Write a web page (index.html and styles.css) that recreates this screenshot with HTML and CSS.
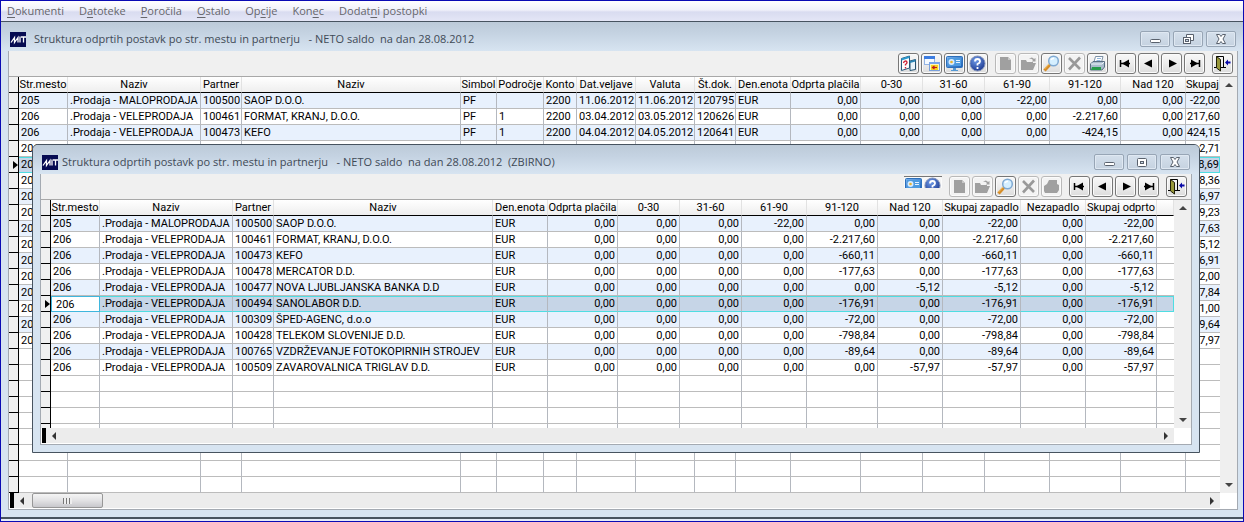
FILE: index.html
```html
<!DOCTYPE html>
<html lang="sl">
<head>
<meta charset="utf-8">
<title>Struktura odprtih postavk</title>
<link rel="stylesheet" href="styles.css">
</head>
<body>
<svg class="defs" aria-hidden="true">
  <linearGradient id="blue" x1="0" y1="0" x2="1" y2="1"><stop offset="0" stop-color="#7db4ee"/><stop offset="1" stop-color="#1c5fb8"/></linearGradient>
  <radialGradient id="ball" cx=".4" cy=".3" r=".8"><stop offset="0" stop-color="#6f9be8"/><stop offset="1" stop-color="#152f88"/></radialGradient>
  <symbol id="logo" viewBox="0 0 16 15"><rect width="16" height="15" fill="#060b52"/><path d="M1 10.500L4.500 5.500V10.500L8 5.500V10.500M10 4.500V10.500M11 5H16M13.500 5V10.500" fill="none" stroke="#fff" stroke-width="1.300"/></symbol>
  <symbol id="i-find" viewBox="0 0 17 17"><path d="M1.500 3.500L9.500 1V13L1.500 15.500Z" fill="#fff" stroke="#2b587c"/><path d="M1.500 3.500L9.500 1V3L1.500 5.500Z" fill="#2c9bd0"/><path d="M10 6L15.500 4.500V14.500L10 15.500Z" fill="#e8f4fb" stroke="#24506e"/><path d="M10 6L15.500 4.500V6.500L10 8Z" fill="#2c84b4"/><path d="M3.500 8Q4 6 5.500 6T7 7.500Q7 8.500 5.500 9.500V10.500M5.500 12V13.500" stroke="#d0243a" stroke-width="1.400" fill="none"/></symbol>
  <symbol id="i-windows" viewBox="0 0 17 17"><rect x="1.500" y="1.500" width="10" height="8" fill="#f5faff" stroke="#94b4e4"/><rect x="1" y="1" width="11" height="3" fill="#3c7ce0"/><rect x="6.500" y="7.500" width="10" height="8" fill="#fff6b8" stroke="#7aa0dc"/><rect x="6" y="7" width="11" height="2" fill="#79a4ec"/><rect x="8" y="10" width="7" height="5" fill="#f7d020"/><path d="M9 12.500H14M11.500 11L9.500 12.500L11.500 14" stroke="#c01818" stroke-width="1.200" fill="none"/></symbol>
  <symbol id="i-monitor" viewBox="0 0 17 17"><rect x=".5" y="1.500" width="16" height="11" rx="1" fill="url(#blue)" stroke="#2c70bb"/><rect x="2" y="3" width="13" height="8" fill="#4d9be0"/><circle cx="5.500" cy="7" r="3" fill="#d7ebff"/><circle cx="5.500" cy="7" r="1.300" fill="#e8b430"/><path d="M10 5.500H14M10 7.500H14" stroke="#e6f3ff"/><path d="M7 13H10V15H12V16H5V15H7Z" fill="#5599d4"/></symbol>
  <symbol id="i-help" viewBox="0 0 17 17"><circle cx="8.500" cy="8.500" r="7.500" fill="url(#ball)" stroke="#8292b8"/><path d="M6 6.500Q6 4 8.500 4T11 6.500Q11 8 8.500 9V10.500M8.500 12V14" fill="none" stroke="#fff" stroke-width="1.800"/></symbol>
  <symbol id="i-new" viewBox="0 0 17 17"><path d="M3 2H11L14 5V15H3Z" fill="#a0a0a0"/><path d="M11 2V5H14" fill="#c8c8c8"/></symbol>
  <symbol id="i-open" viewBox="0 0 17 17"><path d="M1 5H6L7 7H13V8H16L13 15H1Z" fill="#a0a0a0"/><path d="M9 4Q12 1 14 4L15.500 3V6.500H12L13 5Q11 3 9 4" fill="#a0a0a0"/></symbol>
  <symbol id="i-search" viewBox="0 0 17 17"><path d="M1.500 15.500L7 9.500" stroke="#d68d28" stroke-width="3.200"/><path d="M1.500 14L6 9" stroke="#f5c46c"/><circle cx="10.500" cy="6" r="4.800" fill="#d5efff" stroke="#7fa9d2" stroke-width="1.500"/><path d="M8 5Q9 3 11 3.500" stroke="#fff" stroke-width="1.500" fill="none"/></symbol>
  <symbol id="i-delete" viewBox="0 0 17 17"><path d="M3 3L14 14M14 2.500L3 14.500" stroke="#999" stroke-width="2.600"/></symbol>
  <symbol id="i-print" viewBox="0 0 17 17"><path d="M5 7L6.500 1.500H14L12.500 7" fill="#fff" stroke="#7c91a6"/><path d="M8 3.500H12M7.500 5.500H11.500" stroke="#92b7df"/><path d="M1.500 9L4 6.500H15.500V12L13 15H1.500Z" fill="#a9bccd" stroke="#596f83"/><path d="M2 9H13L15 7" stroke="#eef5fb" fill="none"/><path d="M3 12H12V15H2Z" fill="#269b4b"/></symbol>
  <symbol id="i-printoff" viewBox="0 0 17 17"><path d="M6 2H14V6L16 7V12L14 15H2L1 13V8L4 6Z" fill="#a0a0a0"/></symbol>
  <symbol id="i-first" viewBox="0 0 17 17"><path d="M3.500 5V12M4 8.500H13" stroke="#000" stroke-width="1.500"/><path d="M5 8.500L12 4.500V12.500Z"/></symbol>
  <symbol id="i-prev" viewBox="0 0 17 17"><path d="M4 8.500L12 4.500V12.500Z"/></symbol>
  <symbol id="i-next" viewBox="0 0 17 17"><path d="M14 8.500L6 4.500V12.500Z"/></symbol>
  <symbol id="i-last" viewBox="0 0 17 17"><path d="M13.500 5V12M4 8.500H13" stroke="#000" stroke-width="1.500"/><path d="M12 8.500L5 4.500V12.500Z"/></symbol>
  <symbol id="i-exit" viewBox="0 0 17 17"><path d="M2.500 12.500V1.500H9.500V12.500M0 12.500H3M7 12.500H12" fill="none" stroke="#000"/><path d="M2.500 1.500L6.500 4.500V16L2.500 13Z" fill="#98983a" stroke="#20200a"/><path d="M11 7.500L14 4.500V6.500H16.500V8.500H14V10.500Z" fill="#0808a8"/></symbol>
  <symbol id="w-min" viewBox="0 0 16 12"><rect x="3.500" y="6.500" width="10" height="3" rx="1" fill="#fff" stroke="#59616d"/></symbol>
  <symbol id="w-restore" viewBox="0 0 16 12"><path d="M6.500 1.500H13.500V7.500H10.500V4.500H6.500Z" fill="#fff" stroke="#59616d"/><rect x="3.500" y="4.500" width="7" height="6" fill="#fff" stroke="#59616d"/><rect x="5.500" y="6.500" width="3" height="2" fill="#cbd9e7" stroke="#59616d"/></symbol>
  <symbol id="w-max" viewBox="0 0 16 12"><rect x="3.500" y="2.500" width="9" height="8" rx="1" fill="#fff" stroke="#59616d"/><rect x="6.500" y="5.500" width="3" height="2" fill="#cbd9e7" stroke="#59616d"/></symbol>
  <symbol id="w-close" viewBox="0 0 16 12"><path d="M3.500 1.500H6.500L8 3.500L9.500 1.500H12.500L10 6L12.500 10.500H9.500L8 8.500L6.500 10.500H3.500L6 6Z" fill="#fff" stroke="#59616d"/></symbol>
</svg>

<div class="app">
  <nav class="menu">
    <button><u>D</u>okumenti</button>
    <button>D<u>a</u>toteke</button>
    <button><u>P</u>oročila</button>
    <button><u>O</u>stalo</button>
    <button>Op<u>c</u>ije</button>
    <button>Kon<u>e</u>c</button>
    <button>Dodat<u>n</u>i postopki</button>
  </nav>

  <main class="window window-main">
    <header class="titlebar">
      <svg class="logo"><use href="#logo"/></svg>
      <h1 class="title">Struktura odprtih postavk po str. mestu in partnerju   - NETO saldo  na dan 28.08.2012</h1>
      <div class="controls">
        <button aria-label="Pomanjšaj"><svg><use href="#w-min"/></svg></button>
        <button aria-label="Obnovi"><svg><use href="#w-restore"/></svg></button>
        <button aria-label="Zapri"><svg><use href="#w-close"/></svg></button>
      </div>
    </header>
    <div class="content">
      <div class="toolbar">
        <div class="group">
          <button aria-label="Poizvedba"><svg><use href="#i-find"/></svg></button>
          <button aria-label="Okna"><svg><use href="#i-windows"/></svg></button>
          <button aria-label="Zaslon"><svg><use href="#i-monitor"/></svg></button>
          <button aria-label="Pomoč"><svg><use href="#i-help"/></svg></button>
        </div>
        <div class="group">
          <button disabled aria-label="Nov"><svg><use href="#i-new"/></svg></button>
          <button disabled aria-label="Odpri"><svg><use href="#i-open"/></svg></button>
          <button aria-label="Išči"><svg><use href="#i-search"/></svg></button>
          <button disabled aria-label="Briši"><svg><use href="#i-delete"/></svg></button>
          <button aria-label="Tiskaj"><svg><use href="#i-print"/></svg></button>
        </div>
        <div class="group">
          <button aria-label="Prvi"><svg><use href="#i-first"/></svg></button>
          <button aria-label="Prejšnji"><svg><use href="#i-prev"/></svg></button>
          <button aria-label="Naslednji"><svg><use href="#i-next"/></svg></button>
          <button aria-label="Zadnji"><svg><use href="#i-last"/></svg></button>
        </div>
        <div class="group"><button aria-label="Izhod"><svg><use href="#i-exit"/></svg></button></div>
      </div>
      <div class="gridarea">
        <div class="viewport"><table class="grid" id="details"></table></div>
        <div class="vscroll"><button class="up" aria-label="Gor"></button><button class="down" aria-label="Dol"></button></div>
        <div class="hscroll"><span class="marker"></span><button class="left" aria-label="Levo"></button><span class="thumb"></span><button class="right" aria-label="Desno"></button></div>
        <div class="corner"></div>
      </div>
    </div>
  </main>

  <section class="window window-summary">
    <header class="titlebar">
      <svg class="logo"><use href="#logo"/></svg>
      <h2 class="title">Struktura odprtih postavk po str. mestu in partnerju   - NETO saldo  na dan 28.08.2012  (ZBIRNO)</h2>
      <div class="controls">
        <button aria-label="Pomanjšaj"><svg><use href="#w-min"/></svg></button>
        <button aria-label="Povečaj"><svg><use href="#w-max"/></svg></button>
        <button aria-label="Zapri"><svg><use href="#w-close"/></svg></button>
      </div>
    </header>
    <div class="content">
      <div class="toolbar">
        <div class="group clipped">
          <button aria-label="Zaslon"><svg><use href="#i-monitor"/></svg></button>
          <button aria-label="Pomoč"><svg><use href="#i-help"/></svg></button>
        </div>
        <div class="group">
          <button disabled aria-label="Nov"><svg><use href="#i-new"/></svg></button>
          <button disabled aria-label="Odpri"><svg><use href="#i-open"/></svg></button>
          <button aria-label="Išči"><svg><use href="#i-search"/></svg></button>
          <button disabled aria-label="Briši"><svg><use href="#i-delete"/></svg></button>
          <button disabled aria-label="Tiskaj"><svg><use href="#i-printoff"/></svg></button>
        </div>
        <div class="group">
          <button aria-label="Prvi"><svg><use href="#i-first"/></svg></button>
          <button aria-label="Prejšnji"><svg><use href="#i-prev"/></svg></button>
          <button aria-label="Naslednji"><svg><use href="#i-next"/></svg></button>
          <button aria-label="Zadnji"><svg><use href="#i-last"/></svg></button>
        </div>
        <div class="group"><button aria-label="Izhod"><svg><use href="#i-exit"/></svg></button></div>
      </div>
      <div class="gridarea">
        <div class="viewport"><table class="grid" id="summary"></table></div>
        <div class="vscroll"><button class="up" aria-label="Gor"></button><button class="down" aria-label="Dol"></button></div>
        <div class="hscroll"><span class="marker"></span><button class="left" aria-label="Levo"></button><button class="right" aria-label="Desno"></button></div>
        <div class="corner"></div>
      </div>
    </div>
  </section>
</div>
<script src="app.js"></script>
</body>
</html>
```
FILE: styles.css
```css
* { box-sizing: border-box; }
body { margin: 0; font-family: Roboto, "Liberation Sans", sans-serif; font-size: 11px; color: #000; }
button { padding: 0; border: 0; background: none; font: inherit; color: inherit; }
.defs { position: absolute; width: 0; height: 0; }

.app { position: relative; display: flex; flex-direction: column; height: 100vh; min-height: 480px; padding-bottom: 2px; border: 1px solid #0a0ab4; background: #e4ecf8; overflow: hidden; }

.menu { display: flex; flex: none; gap: 15px; height: 20px; padding-left: 6px; align-items: center; background: linear-gradient(#fff, #f0f1fa 45%, #d9dcf0 55%, #e4e6f6); font-family: "Open Sans", "Noto Sans", sans-serif; font-size: 11px; line-height: 18px; color: #66666c; }
.menu u { text-underline-offset: 2px; }

.window { display: flex; flex-direction: column; border: 1px solid #47535f; background: #d7e4f1; }
.window-main { flex: 1; min-height: 0; padding: 0 5px 7px 7px; border-width: 1px 0 2px; }
.window-summary { position: absolute; inset: 143px 43px 68px 31px; padding: 0 7px 7px; border-radius: 6px 6px 0 0; overflow: hidden; }

.titlebar { display: flex; flex: none; align-items: center; gap: 4px; height: 29px; margin: 0 -7px; padding: 5px 9px 0; background: linear-gradient(#bccad8, #c5d3e2 40%, #d7e4f1); }
.window-main .titlebar { gap: 8px; margin-right: -5px; padding-right: 7px; }
.logo { flex: none; width: 16px; height: 15px; }
.title { flex: 1; margin: 0; font-family: "Open Sans", "Noto Sans", sans-serif; font-size: 11px; font-weight: 400; line-height: 18px; white-space: pre; color: #3f4a56; overflow: hidden; }
.controls { display: flex; gap: 3px; }
.controls button { display: grid; place-items: center; width: 30px; height: 16px; border: 1px solid #97a5b5; border-radius: 2px; background: linear-gradient(#d5e0ec, #c5d2e0); box-shadow: inset 0 0 0 1px #dfe8f2; }
.controls svg { width: 16px; height: 12px; }

.content { display: flex; flex: 1; flex-direction: column; min-height: 0; border: solid #a4aab2; border-width: 0 1px 1px; background: #f0f0f0; }
.toolbar { display: flex; flex: none; justify-content: flex-end; gap: 7px; height: 25px; padding: 2px 4px 0 0; }
.group { display: flex; gap: 2px; }
.group button { display: grid; place-items: center; width: 21px; height: 21px; border: 1px solid #777; border-radius: 3px; background: linear-gradient(#f8f8f8, #ececec 50%, #dcdcdc); box-shadow: inset 0 0 0 1px #fbfbfb; }
.group button:disabled { border-color: #b9b9b9; background: #f3f3f3; }
.group svg { width: 17px; height: 17px; }
.clipped { height: 12px; gap: 0; overflow: hidden; border-top: 1px solid #777; }
.clipped button { width: 19px; height: 17px; border: 0; }

.gridarea { display: grid; flex: 1; grid-template: minmax(0, 1fr) 16px / minmax(0, 1fr) 17px; min-height: 0; border-top: 1px solid #a8a8a8; background: #fff; }
.viewport { overflow: hidden; }
.grid { width: 100%; table-layout: fixed; border-collapse: separate; border-spacing: 0; line-height: 15px; }
.grid th, .grid td { height: 16px; padding: 0 2px; overflow: hidden; white-space: nowrap; font-weight: 400; text-align: left; }
.grid thead th { padding: 0; border-right: 1px solid #e2e2e2; border-bottom: 1px solid #000; background: linear-gradient(#fff, #eee); text-align: center; }
.grid td { border-right: 1px solid #b4b8bf; border-bottom: 1px solid #bcbcbc; background: #fff; }
.grid .odd td { background: #e8f1fd; }
.grid td.blank, .grid td:last-child { padding: 0; border-right: 0; }
.grid .odd td.blank { background: #fff; }
.grid td.num { text-align: right; }
.grid .rowhead, .grid thead .rowhead { padding: 0; border-right: 1px solid #000; border-bottom: 1px solid #000; background: #f0f0f0; }
.grid .current td { border-top: 1px solid #4fdde2; border-bottom-color: #4fdde2; background: #c6d5e7; line-height: 14px; }
.grid .current td:last-child { border-right: 1px solid #4fdde2; background: #c6d5e7; }
.pointer { display: block; width: 0; margin-left: 4px; border: solid transparent; border-width: 4px 0 4px 5px; border-left-color: #000; }
.clip { display: flex; justify-content: flex-end; overflow: hidden; }
.grid .current td.editing { padding: 0; border: 0; }
.cell { display: block; width: 100%; height: 16px; padding: 0 4px; border: 1px solid #3fb6dd; background: #fff; font: inherit; color: inherit; outline: 0; }

.vscroll { display: flex; flex-direction: column; justify-content: space-between; align-items: center; padding: 6px 0; background: #efefef; }
.hscroll { display: flex; align-items: center; background: #ececec; border-bottom: 1px solid #fff; }
.corner { background: #fff; }
.marker { align-self: stretch; width: 5px; border-left: 1px solid #fff; background: #000; }
.vscroll button, .hscroll button { border: 4px solid transparent; }
.vscroll .up { border-top: 0; border-bottom-color: #444; }
.vscroll .down { border-bottom: 0; border-top-color: #444; }
.hscroll .left { margin-left: 6px; border-left: 0; border-right-color: #333; }
.hscroll .right { margin: 0 6px 0 auto; border-right: 0; border-left-color: #333; }
.thumb { align-self: stretch; width: 71px; margin-left: 8px; border: 1px solid #979797; border-radius: 2px; background: repeating-linear-gradient(90deg, #777 0 1px, #eee 1px 3px) center / 9px 6px no-repeat, linear-gradient(#f5f5f5, #e2e2e4 50%, #c8c8cc); }
```
FILE: app.js
```js
const ROW_COUNT = { details: 25, summary: 14 };

const details = {
  columns: [["Str.mesto", 49], ["Naziv", 133], ["Partner", 41], ["Naziv", 219], ["Simbol", 36], ["Področje", 47], ["Konto", 33],
    ["Dat.veljave", 59], ["Valuta", 59], ["Št.dok.", 41], ["Den.enota", 55], ["Odprta plačila", 70, 1], ["0-30", 62, 1],
    ["31-60", 62, 1], ["61-90", 65, 1], ["91-120", 71, 1], ["Nad 120", 65, 1], ["Skupaj", 0, 1]],
  rows: [
    "205|.Prodaja - MALOPRODAJA|100500|SAOP D.O.O.|PF||2200|11.06.2012|11.06.2012|120795|EUR|0,00|0,00|0,00|-22,00|0,00|0,00|-22,00",
    "206|.Prodaja - VELEPRODAJA|100461|FORMAT, KRANJ, D.O.O.|PF|1|2200|03.04.2012|03.05.2012|120626|EUR|0,00|0,00|0,00|0,00|-2.217,60|0,00|217,60",
    "206|.Prodaja - VELEPRODAJA|100473|KEFO|PF|1|2200|04.04.2012|04.05.2012|120641|EUR|0,00|0,00|0,00|0,00|-424,15|0,00|424,15",
    ...["2,71", "8,69", "8,36", "6,97", "9,23", "7,63", "5,12", "6,91", "2,00", "7,84", "1,00", "9,64", "7,97"]
      .map(total => "206" + "|".repeat(17) + total)
  ],
  current: 4
};

const summary = {
  columns: [["Str.mesto", 49], ["Naziv", 133], ["Partner", 41], ["Naziv", 219], ["Den.enota", 55], ["Odprta plačila", 70, 1],
    ["0-30", 62, 1], ["31-60", 62, 1], ["61-90", 65, 1], ["91-120", 71, 1], ["Nad 120", 65, 1], ["Skupaj zapadlo", 78, 1],
    ["Nezapadlo", 65, 1], ["Skupaj odprto", 71, 1], ["", 0]],
  rows: [
    "205|.Prodaja - MALOPRODAJA|100500|SAOP D.O.O.|EUR|0,00|0,00|0,00|-22,00|0,00|0,00|-22,00|0,00|-22,00",
    "206|.Prodaja - VELEPRODAJA|100461|FORMAT, KRANJ, D.O.O.|EUR|0,00|0,00|0,00|0,00|-2.217,60|0,00|-2.217,60|0,00|-2.217,60",
    "206|.Prodaja - VELEPRODAJA|100473|KEFO|EUR|0,00|0,00|0,00|0,00|-660,11|0,00|-660,11|0,00|-660,11",
    "206|.Prodaja - VELEPRODAJA|100478|MERCATOR D.D.|EUR|0,00|0,00|0,00|0,00|-177,63|0,00|-177,63|0,00|-177,63",
    "206|.Prodaja - VELEPRODAJA|100477|NOVA LJUBLJANSKA BANKA D.D|EUR|0,00|0,00|0,00|0,00|0,00|-5,12|-5,12|0,00|-5,12",
    "206|.Prodaja - VELEPRODAJA|100494|SANOLABOR D.D.|EUR|0,00|0,00|0,00|0,00|-176,91|0,00|-176,91|0,00|-176,91",
    "206|.Prodaja - VELEPRODAJA|100309|ŠPED-AGENC, d.o.o|EUR|0,00|0,00|0,00|0,00|-72,00|0,00|-72,00|0,00|-72,00",
    "206|.Prodaja - VELEPRODAJA|100428|TELEKOM SLOVENIJE D.D.|EUR|0,00|0,00|0,00|0,00|-798,84|0,00|-798,84|0,00|-798,84",
    "206|.Prodaja - VELEPRODAJA|100765|VZDRŽEVANJE FOTOKOPIRNIH STROJEV|EUR|0,00|0,00|0,00|0,00|-89,64|0,00|-89,64|0,00|-89,64",
    "206|.Prodaja - VELEPRODAJA|100509|ZAVAROVALNICA TRIGLAV D.D.|EUR|0,00|0,00|0,00|0,00|0,00|-57,97|-57,97|0,00|-57,97"
  ],
  current: 5,
  editable: true
};

function fill(id, data) {
  const cols = data.columns;
  let html = '<colgroup><col style="width:10px">' +
    cols.map(c => c[1] ? `<col style="width:${c[1]}px">` : "<col>").join("") + "</colgroup>";
  html += '<thead><tr><th class="rowhead"></th>' + cols.map(c => `<th scope="col">${c[0]}</th>`).join("") + "</tr></thead><tbody>";
  for (let r = 0; r < ROW_COUNT[id]; r++) {
    const values = data.rows[r] ? data.rows[r].split("|") : [];
    const current = r === data.current;
    const rowClass = current ? "current" : data.rows[r] && r % 2 === 0 ? "odd" : "";
    html += `<tr class="${rowClass}"><th class="rowhead">${current ? '<span class="pointer"></span>' : ""}</th>`;
    cols.forEach((c, i) => {
      const value = values[i] || "";
      if (current && i === 0 && data.editable) {
        html += `<td class="editing"><input class="cell" aria-label="${c[0]}" value="${value}"></td>`;
      } else if (!c[0]) {
        html += '<td class="blank"></td>';
      } else if (!c[1]) {
        html += `<td><div class="clip">${value}</div></td>`;
      } else {
        html += `<td${c[2] ? ' class="num"' : ""}>${value}</td>`;
      }
    });
    html += "</tr>";
  }
  document.getElementById(id).innerHTML = html + "</tbody>";
}

fill("details", details);
fill("summary", summary);
```
